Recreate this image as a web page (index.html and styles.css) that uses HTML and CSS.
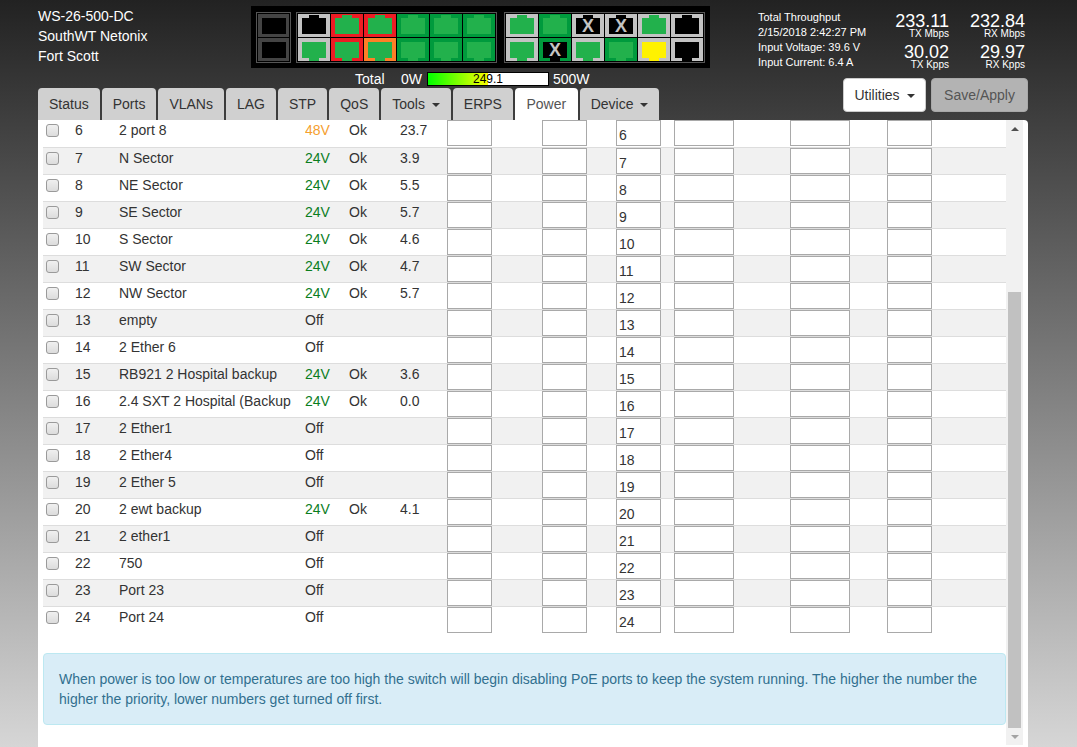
FILE: index.html
```html
<!DOCTYPE html>
<html lang="en">
<head>
<meta charset="utf-8">
<title>WS-26-500-DC</title>
<link rel="stylesheet" href="styles.css">
</head>
<body>
<header class="top">
  <div class="device">
    <div>WS-26-500-DC</div>
    <div>SouthWT Netonix</div>
    <div>Fort Scott</div>
  </div>
  <div class="portarea">
    <div class="portbox">
      <div class="group sfp">
        <div class="p dim"><div class="j"></div></div>
        <div class="p dim"><div class="j"></div></div>
      </div>
      <div class="group six">
        <div class="p silver up"><div class="j black"></div></div>
        <div class="p red up"><div class="j"></div></div>
        <div class="p red up"><div class="j"></div></div>
        <div class="p dg up"><div class="j"></div></div>
        <div class="p dg up"><div class="j"></div></div>
        <div class="p dg up"><div class="j"></div></div>
        <div class="p silver dn"><div class="j"></div></div>
        <div class="p red dn"><div class="j"></div></div>
        <div class="p orange dn"><div class="j"></div></div>
        <div class="p dg dn"><div class="j"></div></div>
        <div class="p dg dn"><div class="j"></div></div>
        <div class="p dg dn"><div class="j"></div></div>
      </div>
      <div class="group six">
        <div class="p silver up"><div class="j"></div></div>
        <div class="p dg up"><div class="j"></div></div>
        <div class="p silver up"><div class="j black">X</div></div>
        <div class="p silver up"><div class="j black">X</div></div>
        <div class="p silver up"><div class="j"></div></div>
        <div class="p silver up"><div class="j black"></div></div>
        <div class="p silver dn"><div class="j"></div></div>
        <div class="p dg dn"><div class="j black">X</div></div>
        <div class="p silver dn"><div class="j"></div></div>
        <div class="p dg dn"><div class="j"></div></div>
        <div class="p silver dn"><div class="j yellow"></div></div>
        <div class="p silver dn"><div class="j black"></div></div>
      </div>
    </div>
    <div class="total">
      <span class="total-label">Total</span>
      <span class="total-min">0W</span>
      <div class="bar">
        <div class="fill" style="width:60px"></div>
        <div class="bar-text">249.1</div>
      </div>
      <span class="total-max">500W</span>
    </div>
  </div>
  <div class="info">
    <div>Total Throughput</div>
    <div>2/15/2018 2:42:27 PM</div>
    <div>Input Voltage: 39.6 V</div>
    <div>Input Current: 6.4 A</div>
  </div>
  <div class="stats">
    <div class="stat"><div class="val">233.11</div><div class="lab">TX Mbps</div></div>
    <div class="stat"><div class="val">232.84</div><div class="lab">RX Mbps</div></div>
    <div class="stat"><div class="val">30.02</div><div class="lab">TX Kpps</div></div>
    <div class="stat"><div class="val">29.97</div><div class="lab">RX Kpps</div></div>
  </div>
</header>
<nav class="navrow">
  <ul class="tabs">
    <li class="tab">Status</li>
    <li class="tab">Ports</li>
    <li class="tab">VLANs</li>
    <li class="tab">LAG</li>
    <li class="tab">STP</li>
    <li class="tab">QoS</li>
    <li class="tab">Tools <span class="caret"></span></li>
    <li class="tab">ERPS</li>
    <li class="tab active">Power</li>
    <li class="tab">Device <span class="caret"></span></li>
  </ul>
  <div class="actions">
    <button class="btn util" type="button">Utilities <span class="caret"></span></button>
    <button class="btn save" type="button">Save/Apply</button>
  </div>
</nav>
<main class="panel">
  <div class="content">
    <table class="ports">
      <colgroup>
        <col class="c-check"><col class="c-num"><col class="c-name"><col class="c-volt"><col class="c-stat"><col class="c-pow"><col class="c-i1"><col class="c-i2"><col class="c-i3"><col class="c-i4"><col class="c-i5"><col class="c-i6">
      </colgroup>
      <tbody>
        <tr><td><input class="cb" type="checkbox"></td><td>6</td><td>2 port 8</td><td class="v48">48V</td><td>Ok</td><td>23.7</td><td><input class="n" type="text"></td><td><input class="n" type="text"></td><td><input class="n" type="text" value="6"></td><td><input class="w" type="text"></td><td><input class="w" type="text"></td><td><input class="n" type="text"></td></tr>
        <tr><td><input class="cb" type="checkbox"></td><td>7</td><td>N Sector</td><td class="v24">24V</td><td>Ok</td><td>3.9</td><td><input class="n" type="text"></td><td><input class="n" type="text"></td><td><input class="n" type="text" value="7"></td><td><input class="w" type="text"></td><td><input class="w" type="text"></td><td><input class="n" type="text"></td></tr>
        <tr><td><input class="cb" type="checkbox"></td><td>8</td><td>NE Sector</td><td class="v24">24V</td><td>Ok</td><td>5.5</td><td><input class="n" type="text"></td><td><input class="n" type="text"></td><td><input class="n" type="text" value="8"></td><td><input class="w" type="text"></td><td><input class="w" type="text"></td><td><input class="n" type="text"></td></tr>
        <tr><td><input class="cb" type="checkbox"></td><td>9</td><td>SE Sector</td><td class="v24">24V</td><td>Ok</td><td>5.7</td><td><input class="n" type="text"></td><td><input class="n" type="text"></td><td><input class="n" type="text" value="9"></td><td><input class="w" type="text"></td><td><input class="w" type="text"></td><td><input class="n" type="text"></td></tr>
        <tr><td><input class="cb" type="checkbox"></td><td>10</td><td>S Sector</td><td class="v24">24V</td><td>Ok</td><td>4.6</td><td><input class="n" type="text"></td><td><input class="n" type="text"></td><td><input class="n" type="text" value="10"></td><td><input class="w" type="text"></td><td><input class="w" type="text"></td><td><input class="n" type="text"></td></tr>
        <tr><td><input class="cb" type="checkbox"></td><td>11</td><td>SW Sector</td><td class="v24">24V</td><td>Ok</td><td>4.7</td><td><input class="n" type="text"></td><td><input class="n" type="text"></td><td><input class="n" type="text" value="11"></td><td><input class="w" type="text"></td><td><input class="w" type="text"></td><td><input class="n" type="text"></td></tr>
        <tr><td><input class="cb" type="checkbox"></td><td>12</td><td>NW Sector</td><td class="v24">24V</td><td>Ok</td><td>5.7</td><td><input class="n" type="text"></td><td><input class="n" type="text"></td><td><input class="n" type="text" value="12"></td><td><input class="w" type="text"></td><td><input class="w" type="text"></td><td><input class="n" type="text"></td></tr>
        <tr><td><input class="cb" type="checkbox"></td><td>13</td><td>empty</td><td>Off</td><td></td><td></td><td><input class="n" type="text"></td><td><input class="n" type="text"></td><td><input class="n" type="text" value="13"></td><td><input class="w" type="text"></td><td><input class="w" type="text"></td><td><input class="n" type="text"></td></tr>
        <tr><td><input class="cb" type="checkbox"></td><td>14</td><td>2 Ether 6</td><td>Off</td><td></td><td></td><td><input class="n" type="text"></td><td><input class="n" type="text"></td><td><input class="n" type="text" value="14"></td><td><input class="w" type="text"></td><td><input class="w" type="text"></td><td><input class="n" type="text"></td></tr>
        <tr><td><input class="cb" type="checkbox"></td><td>15</td><td>RB921 2 Hospital backup</td><td class="v24">24V</td><td>Ok</td><td>3.6</td><td><input class="n" type="text"></td><td><input class="n" type="text"></td><td><input class="n" type="text" value="15"></td><td><input class="w" type="text"></td><td><input class="w" type="text"></td><td><input class="n" type="text"></td></tr>
        <tr><td><input class="cb" type="checkbox"></td><td>16</td><td>2.4 SXT 2 Hospital (Backup</td><td class="v24">24V</td><td>Ok</td><td>0.0</td><td><input class="n" type="text"></td><td><input class="n" type="text"></td><td><input class="n" type="text" value="16"></td><td><input class="w" type="text"></td><td><input class="w" type="text"></td><td><input class="n" type="text"></td></tr>
        <tr><td><input class="cb" type="checkbox"></td><td>17</td><td>2 Ether1</td><td>Off</td><td></td><td></td><td><input class="n" type="text"></td><td><input class="n" type="text"></td><td><input class="n" type="text" value="17"></td><td><input class="w" type="text"></td><td><input class="w" type="text"></td><td><input class="n" type="text"></td></tr>
        <tr><td><input class="cb" type="checkbox"></td><td>18</td><td>2 Ether4</td><td>Off</td><td></td><td></td><td><input class="n" type="text"></td><td><input class="n" type="text"></td><td><input class="n" type="text" value="18"></td><td><input class="w" type="text"></td><td><input class="w" type="text"></td><td><input class="n" type="text"></td></tr>
        <tr><td><input class="cb" type="checkbox"></td><td>19</td><td>2 Ether 5</td><td>Off</td><td></td><td></td><td><input class="n" type="text"></td><td><input class="n" type="text"></td><td><input class="n" type="text" value="19"></td><td><input class="w" type="text"></td><td><input class="w" type="text"></td><td><input class="n" type="text"></td></tr>
        <tr><td><input class="cb" type="checkbox"></td><td>20</td><td>2 ewt backup</td><td class="v24">24V</td><td>Ok</td><td>4.1</td><td><input class="n" type="text"></td><td><input class="n" type="text"></td><td><input class="n" type="text" value="20"></td><td><input class="w" type="text"></td><td><input class="w" type="text"></td><td><input class="n" type="text"></td></tr>
        <tr><td><input class="cb" type="checkbox"></td><td>21</td><td>2 ether1</td><td>Off</td><td></td><td></td><td><input class="n" type="text"></td><td><input class="n" type="text"></td><td><input class="n" type="text" value="21"></td><td><input class="w" type="text"></td><td><input class="w" type="text"></td><td><input class="n" type="text"></td></tr>
        <tr><td><input class="cb" type="checkbox"></td><td>22</td><td>750</td><td>Off</td><td></td><td></td><td><input class="n" type="text"></td><td><input class="n" type="text"></td><td><input class="n" type="text" value="22"></td><td><input class="w" type="text"></td><td><input class="w" type="text"></td><td><input class="n" type="text"></td></tr>
        <tr><td><input class="cb" type="checkbox"></td><td>23</td><td>Port 23</td><td>Off</td><td></td><td></td><td><input class="n" type="text"></td><td><input class="n" type="text"></td><td><input class="n" type="text" value="23"></td><td><input class="w" type="text"></td><td><input class="w" type="text"></td><td><input class="n" type="text"></td></tr>
        <tr><td><input class="cb" type="checkbox"></td><td>24</td><td>Port 24</td><td>Off</td><td></td><td></td><td><input class="n" type="text"></td><td><input class="n" type="text"></td><td><input class="n" type="text" value="24"></td><td><input class="w" type="text"></td><td><input class="w" type="text"></td><td><input class="n" type="text"></td></tr>
      </tbody>
    </table>
    <div class="alert">When power is too low or temperatures are too high the switch will begin disabling PoE ports to keep the system running. The higher the number the higher the priority, lower numbers get turned off first.</div>
  </div>
  <div class="scrollbar">
    <div class="arrow arrow-up"></div>
    <div class="thumb"></div>
    <div class="arrow arrow-down"></div>
  </div>
</main>
</body>
</html>
```
FILE: styles.css
```css
* { box-sizing: border-box; }
html, body { height: 100%; margin: 0; }
body {
  height: 100vh;
  overflow: hidden;
  padding: 0 49px 0 38px;
  display: flex;
  flex-direction: column;
  background: linear-gradient(#222222, #d6d6d6);
  font-family: "Liberation Sans", Arial, sans-serif;
  font-size: 14px;
  line-height: 20px;
  color: #333;
}

/* header */
.top { display: flex; height: 88px; color: #fff; }
.device { width: 213px; padding-top: 6px; font-size: 14px; line-height: 20px; white-space: nowrap; }

.portarea { width: 459px; padding-top: 6px; }
.portbox { display: flex; gap: 5px; height: 62px; padding: 6px 5px; background: #000; }
.group { display: grid; grid-auto-rows: 23px; gap: 1px; padding: 1px; height: 51px; border: 1px solid #555; }
.group.six { grid-template-columns: repeat(6, 32px); }
.group.six + .group.six { margin-left: 2px; }
.group.sfp { grid-template-columns: 31px; }
.p { display: flex; align-items: center; justify-content: center; }
.j {
  position: relative;
  display: flex;
  align-items: center;
  justify-content: center;
  width: 24px;
  height: 16px;
  background: #22b14c;
  color: #c3c3c3;
  font-size: 18px;
  font-weight: 700;
  line-height: 16px;
}
.up .j::before, .dn .j::before {
  content: "";
  position: absolute;
  left: 7px;
  width: 10px;
  height: 3px;
  background: inherit;
}
.up .j::before { top: -3px; }
.dn .j::before { bottom: -3px; }
.silver { background: #c3c3c3; }
.red { background: #ed1c24; }
.orange { background: #ff7f27; }
.dg { background: #009a3d; }
.dim { background: #444; }
.dim .j { background: #000; }
.j.black { background: #000; }
.j.yellow { background: #fff200; }

.total { display: flex; align-items: center; height: 17px; margin-top: 2px; padding-left: 104px; color: #fff; font-size: 14px; line-height: 14px; }
.total-label { width: 46px; }
.total-min { width: 26px; }
.total-max { margin-left: 4px; }
.bar { display: grid; width: 122px; height: 14px; border: 1px solid #000; background: #fff; color: #000; }
.fill, .bar-text { grid-area: 1 / 1; }
.fill { height: 12px; background: linear-gradient(to right, #00ff00, #ffff00); }
.bar-text { font-size: 12px; line-height: 12px; text-align: center; }

.info { width: 115px; margin-left: 48px; padding-top: 10px; font-size: 11px; line-height: 15px; white-space: nowrap; }
.stats { display: grid; grid-template-columns: 76px 76px; grid-auto-rows: 26px; row-gap: 5px; padding-top: 13px; align-content: start; }
.stat { text-align: right; }
.val { font-size: 18px; line-height: 16px; }
.lab { font-size: 10px; line-height: 10px; }

/* tabs */
.navrow { display: flex; justify-content: space-between; height: 32px; }
.tabs { display: flex; gap: 2px; margin: 0; padding: 0; list-style: none; }
.tab { height: 32px; padding: 6px 11px 0; background: #d0d0d0; border-radius: 4px 4px 0 0; color: #333; white-space: nowrap; }
.tab.active { padding: 6px 11.5px 0; background: #fff; color: #555; }
.caret { display: inline-block; width: 0; height: 0; margin-left: 3px; vertical-align: middle; border-top: 4px solid currentColor; border-left: 4px solid transparent; border-right: 4px solid transparent; }
.actions { display: flex; gap: 5px; height: 34px; margin-top: -10px; }
.btn { height: 34px; padding: 0; border: 1px solid #ccc; border-radius: 4px; font-family: inherit; font-size: 14px; color: #333; white-space: nowrap; }
.util { width: 83px; background: #fff; }
.save { width: 97px; background: #b3b3b3; border-color: #a8a8a8; color: #555; }

/* panel */
.panel { flex: 1; min-height: 0; display: flex; padding: 0 5px; overflow: hidden; background: #fff; border-radius: 0 4px 0 0; }
.content { width: 963px; }
.ports { width: 963px; table-layout: fixed; border-collapse: collapse; }
.c-check { width: 32px; }
.c-num { width: 44px; }
.c-name { width: 186px; }
.c-volt { width: 44px; }
.c-stat { width: 51px; }
.c-pow { width: 47px; }
.c-i1 { width: 95px; }
.c-i2 { width: 74px; }
.c-i3 { width: 58px; }
.c-i4 { width: 116px; }
.c-i5 { width: 97px; }
.c-i6 { width: 119px; }
.ports tr { height: 27px; border-bottom: 1px solid #dddddd; }
.ports tr:nth-child(even) { background: #f1f1f1; }
.ports tr:last-child { border-bottom: 0; }
.ports td { height: 26px; padding: 0; vertical-align: top; white-space: nowrap; overflow: hidden; }
.v24 { color: #0a7d1e; }
.v48 { color: #f5a030; }
.cb { appearance: none; -webkit-appearance: none; display: block; width: 13px; height: 13px; margin: 4px 0 0 3px; background: linear-gradient(#f0f0f0, #dcdcdc); border: 1px solid #9a9a9a; border-radius: 3px; }
.n, .w { display: block; height: 26px; padding: 4px 2px 0; background: #fff; border: 1px solid #a9a9a9; border-radius: 0; font-family: inherit; font-size: 14px; color: #333; }
.n { width: 45px; }
.w { width: 60px; }

.alert { margin-top: 20px; padding: 15px; background: #d9edf7; border: 1px solid #bce8f1; border-radius: 4px; color: #31708f; }

/* scrollbar */
.scrollbar { display: flex; flex-direction: column; align-items: center; justify-content: space-between; width: 17px; height: 625px; background: #f1f1f1; }
.arrow { width: 0; height: 0; margin: 7px 0 6px; border-left: 4px solid transparent; border-right: 4px solid transparent; }
.arrow-up { border-bottom: 4px solid #505050; }
.arrow-down { border-top: 4px solid #a3a3a3; }
.thumb { width: 13px; height: 436px; margin-top: auto; background: #c1c1c1; }
```
